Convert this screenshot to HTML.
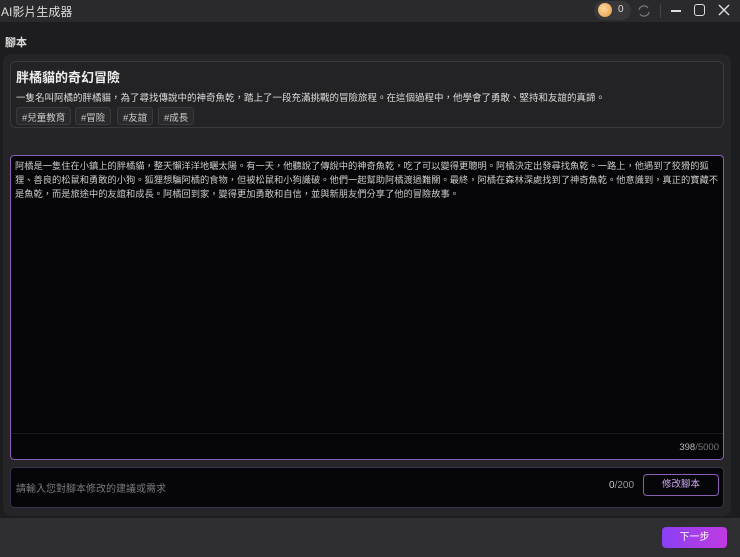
<!DOCTYPE html>
<html><head><meta charset="utf-8"><style>
*{margin:0;padding:0;box-sizing:border-box}
body{width:740px;height:557px;background:#1d1d1f;font-family:"Liberation Sans","Noto Sans CJK TC",sans-serif;color:#ddd;position:relative;overflow:hidden}
.tb{position:absolute;left:0;top:0;width:740px;height:22px;background:#2a2a2c}
.tb .t{position:absolute;left:1px;top:3px;font-size:12px;color:#ddd}
.coin{position:absolute;left:594px;top:1px;width:37px;height:19px;border-radius:10px;background:#38383a}
.coin i{position:absolute;left:4px;top:2px;width:14px;height:14px;border-radius:50%;background:radial-gradient(circle at 40% 40%,#ffd9a0,#e0963c)}
.coin b{position:absolute;left:24px;top:3px;font-size:10px;font-weight:normal;color:#ddd}
.sec{position:absolute;left:5px;top:34px;font-size:11px;font-weight:bold;color:#ddd}
.panel{position:absolute;left:3px;top:54px;width:728px;height:462px;background:#252527;border-radius:8px}
.card{position:absolute;left:10px;top:61px;width:714px;height:67px;border:1px solid #3a3a3d;border-radius:6px;background:#232325}
.card h1{position:absolute;left:5px;top:5px;font-size:13px;color:#eee}
.card p{position:absolute;left:5px;top:28px;font-size:9.5px;color:#ddd;white-space:nowrap}
.tag{position:absolute;top:45px;height:18px;border:1px solid #3a3a3d;background:#2a2a2c;border-radius:3px;font-size:9.5px;color:#ccc;padding:2px 5px}
.ta{position:absolute;left:10px;top:155px;width:714px;height:305px;background:#060608;border:1px solid #8b5fb3;border-radius:4px}
.ta p{position:absolute;left:4px;top:3px;font-size:9.25px;line-height:14px;color:#ccc;white-space:nowrap}
.ta .cnt{position:absolute;right:4px;bottom:6px;font-size:9.5px;color:#bbb}
.ta .ln{position:absolute;left:0;right:0;bottom:25px;border-top:1px solid #1a1a1c}
.in{position:absolute;left:10px;top:467px;width:714px;height:41px;background:#060608;border:1px solid #3e2f4e;border-radius:4px}
.in .ph{position:absolute;left:5px;top:12px;font-size:10px;color:#7a7a7d}
.in .c{position:absolute;left:598px;top:12px;font-size:10px;color:#999}
.in .btn{position:absolute;left:632px;top:6px;width:76px;height:22px;border:1px solid #8b5fb3;border-radius:4px;font-size:9.5px;color:#c9a5f0;text-align:center;line-height:20px}
.ft{position:absolute;left:0;top:518px;width:740px;height:39px;background:#2f2f31}
.next{position:absolute;left:662px;top:527px;width:65px;height:21px;border-radius:4px;background:linear-gradient(90deg,#8a40f5,#c03ae0);font-size:10px;color:#fff;text-align:center;line-height:21px}
</style></head><body>
<div class="tb"><span class="t">AI影片生成器</span>
<div class="coin"><i></i><b>0</b></div>
<svg style="position:absolute;left:636px;top:3px" width="16" height="16" viewBox="0 0 16 16" fill="none" stroke="#777" stroke-width="1.2"><path d="M3 7a5 5 0 0 1 9-2M13 9a5 5 0 0 1-9 2"/></svg>
<div style="position:absolute;left:660px;top:4px;width:1px;height:14px;background:#444"></div>
<div style="position:absolute;left:671px;top:10px;width:10px;height:1.5px;background:#ddd"></div>
<div style="position:absolute;left:694px;top:4px;width:11px;height:12px;border:1.5px solid #ddd;border-radius:3px"></div>
<svg style="position:absolute;left:718px;top:4px" width="12" height="12" viewBox="0 0 12 12" stroke="#ddd" stroke-width="1.4"><path d="M1 1L11 11M11 1L1 11"/></svg>
</div>
<div class="sec">腳本</div>
<div class="panel"></div>
<div class="card"><h1>胖橘貓的奇幻冒險</h1>
<p>一隻名叫阿橘的胖橘貓，為了尋找傳說中的神奇魚乾，踏上了一段充滿挑戰的冒險旅程。在這個過程中，他學會了勇敢、堅持和友誼的真諦。</p>
<span class="tag" style="left:5px">#兒童教育</span><span class="tag" style="left:64px">#冒險</span><span class="tag" style="left:106px">#友誼</span><span class="tag" style="left:147px">#成長</span></div>
<div class="ta"><p>阿橘是一隻住在小鎮上的胖橘貓，整天懶洋洋地曬太陽。有一天，他聽說了傳說中的神奇魚乾，吃了可以變得更聰明。阿橘決定出發尋找魚乾。一路上，他遇到了狡猾的狐<br>狸、善良的松鼠和勇敢的小狗。狐狸想騙阿橘的食物，但被松鼠和小狗識破。他們一起幫助阿橘渡過難關。最終，阿橘在森林深處找到了神奇魚乾。他意識到，真正的寶藏不<br>是魚乾，而是旅途中的友誼和成長。阿橘回到家，變得更加勇敢和自信，並與新朋友們分享了他的冒險故事。</p>
<div class="ln"></div><div class="cnt">398<span style="color:#777">/5000</span></div></div>
<div class="in"><span class="ph">請輸入您對腳本修改的建議或需求</span><span class="c"><span style="color:#ccc">0</span>/200</span><div class="btn">修改腳本</div></div>
<div class="ft"></div>
<div class="next">下一步</div>
</body></html>
